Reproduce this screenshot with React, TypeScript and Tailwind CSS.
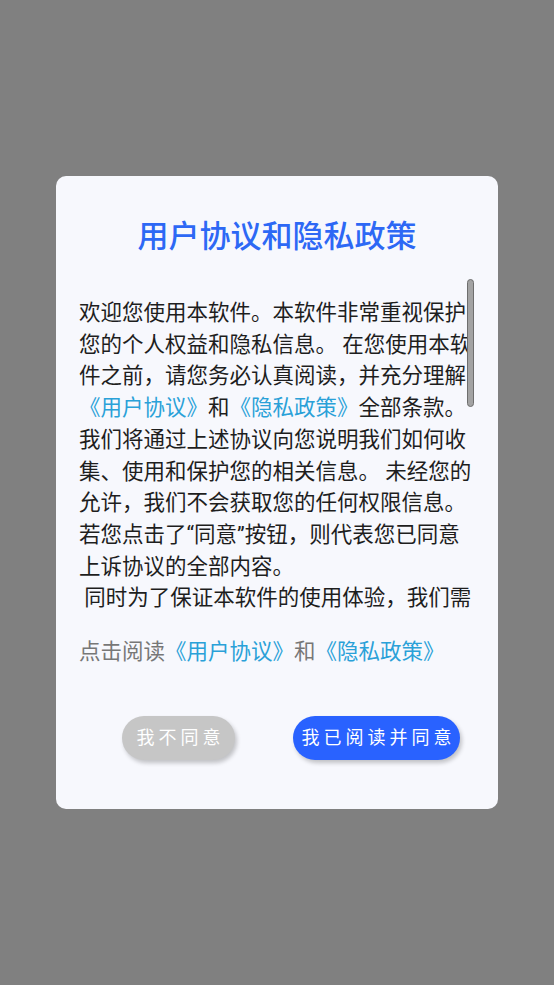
import React from 'react'

const agreement =
  '欢迎您使用本软件。本软件非常重视保护您的个人权益和隐私信息。 在您使用本软件之前，请您务必认真阅读，并充分理解'

const agreementRest =
  '全部条款。我们将通过上述协议向您说明我们如何收集、使用和保护您的相关信息。 未经您的允许，我们不会获取您的任何权限信息。若您点击了“同意”按钮，则代表您已同意上诉协议的全部内容。\n 同时为了保证本软件的使用体验，我们需要申请以下权限：存储权限，用于缓存图片和数据；网络权限，用于获取最新内容；设备信息权限，用于保障账号安全。您可以在系统设置中随时关闭上述权限，关闭后可能会影响部分功能的正常使用。\n 我们会严格按照法律法规的要求保护您的个人信息，不会向任何第三方出售您的个人信息。如您对本协议有任何疑问，可通过软件内的意见反馈与我们联系。'

const font = { fontFamily: 'Roboto, "Noto Sans CJK SC", sans-serif' }

export default function App() {
  return (
    <div className="flex h-[985px] w-full items-center justify-center bg-[#808080]" style={font}>
      <div className="flex h-[633px] w-[442px] flex-col rounded-[10px] bg-[#f7f8fd]">
        {/* 标题 */}
        <h1 className="mt-[43px] h-[36px] text-center text-[31px] font-medium leading-[36px] text-[#2d68f5]">
          用户协议和隐私政策
        </h1>

        {/* 协议内容 */}
        <div className="relative mx-[23px] mt-[24px] h-[339px]">
          <div className="h-full overflow-y-auto pt-[18px] [scrollbar-width:none] [&::-webkit-scrollbar]:hidden">
            <p className="whitespace-pre-wrap text-[21.5px] leading-[31.7px] text-[#1e1e1e]">
              {agreement}
              <span className="text-[#2aa1d8]">《用户协议》</span>和
              <span className="text-[#2aa1d8]">《隐私政策》</span>
              {agreementRest}
            </p>
          </div>
          <div className="absolute right-[1px] top-0 h-[128px] w-[7px] rounded-full border border-[#6e6e6e] bg-[#a3a3a3]" />
        </div>

        <p className="mx-[23px] mt-[18px] text-[21.5px] leading-[31.7px] text-[#777]">
          点击阅读<span className="text-[#2aa1d8]">《用户协议》</span>和<span className="text-[#2aa1d8]">《隐私政策》</span>
        </p>

        {/* 按钮 */}
        <div className="mt-[48px] flex justify-center gap-[58px] pl-[28px]">
          <button className="h-[44px] w-[113px] rounded-full bg-[#c6c6c6] pl-[4px] text-[18px] tracking-[4px] text-white shadow-[2px_3px_4px_rgba(0,0,0,0.22)]">
            我不同意
          </button>
          <button className="h-[44px] w-[167px] rounded-full bg-[#2962ff] pl-[4px] text-[18px] tracking-[4px] text-white shadow-[2px_3px_4px_rgba(0,0,0,0.22)]">
            我已阅读并同意
          </button>
        </div>
      </div>
    </div>
  )
}
